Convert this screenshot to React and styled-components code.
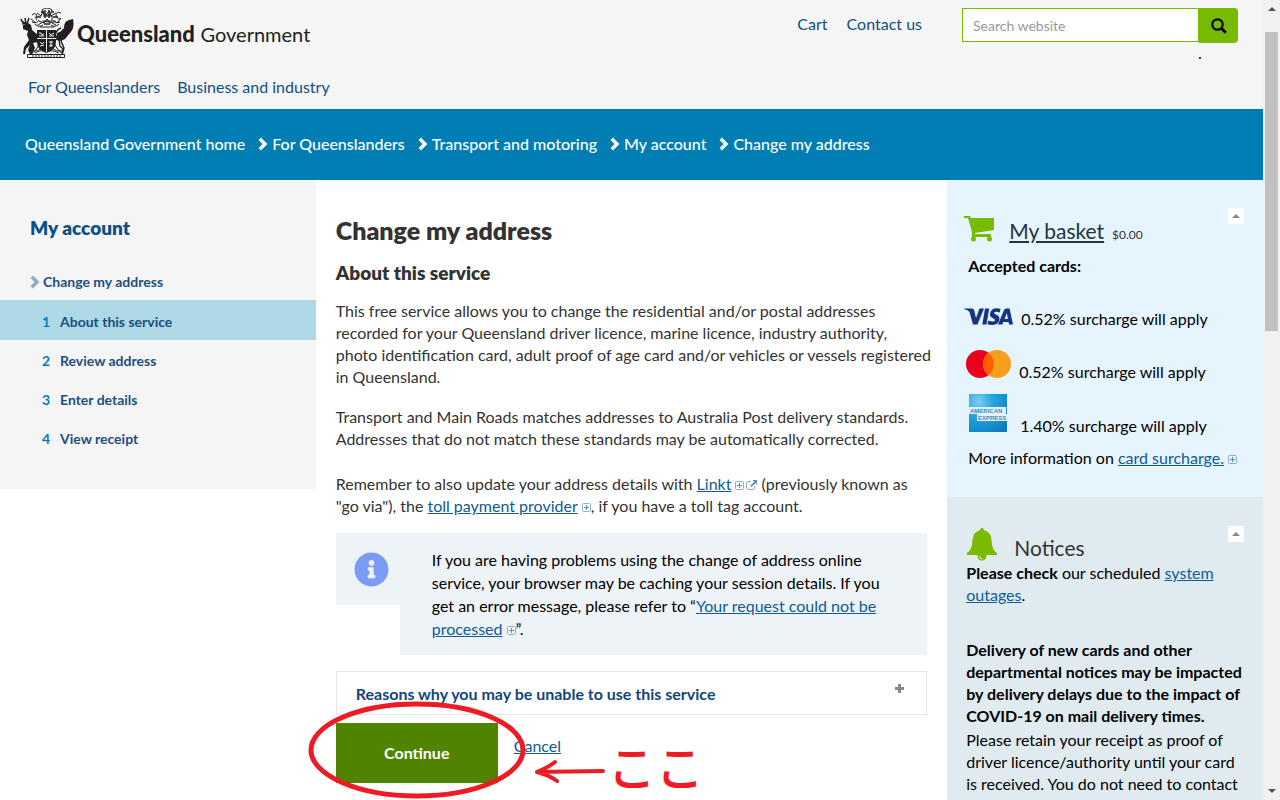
import React from 'react'
import styled, { createGlobalStyle } from 'styled-components'
import { FaInfoCircle } from 'react-icons/fa'

const GlobalStyle = createGlobalStyle`
    *{
        box-sizing: border-box;
    }
    body{
        margin: 0;
        font-family: Lato, "Liberation Sans", sans-serif;
        font-size: 16px;
        line-height: 22px;
        color: #333;
        background: #fff;
        overflow: hidden;
    }
    h1, h2, h3, p, ol, ul{
        margin: 0;
        padding: 0;
        font-weight: 400;
    }
    ol, ul{
        list-style: none;
    }
    button, input{
        font-family: inherit;
        border-radius: 0;
    }
`

const Window = styled.div`
    display: grid;
    grid-template-columns: minmax(0, 1fr) 17px;
    height: 100vh;
    overflow: hidden;
`

const Page = styled.div`
    height: 100vh;
    overflow: hidden;
`

const ScrollTrack = styled.div`
    display: flex;
    flex-direction: column;
    align-items: center;
    justify-content: space-between;
    background: #f1f1f1;
    padding: 7px 2px;
`

const ScrollThumb = styled.div`
    width: 13px;
    height: 299px;
    background: #c1c1c1;
`

const ScrollTop = styled.div`
    display: flex;
    flex-direction: column;
    align-items: center;
    gap: 21px;
`

const Header = styled.header`
    background: #f5f5f5;
    height: 109px;
    padding: 8px 25px 0 20px;
    display: flex;
    flex-direction: column;
    justify-content: space-between;
`

const HeaderTop = styled.div`
    display: flex;
    justify-content: space-between;
    align-items: flex-start;
`

const Brand = styled.a`
    display: flex;
    align-items: center;
    gap: 3px;
    color: #231f20;
    text-decoration: none;
    font-size: 22px;
    line-height: 52px;
    white-space: nowrap;
`

const BrandStrong = styled.strong`
    font-weight: 900;
`

const BrandLight = styled.span`
    font-size: 20px;
    font-weight: 400;
`

const HeaderTools = styled.div`
    display: flex;
    align-items: flex-start;
    gap: 40px;
`

const TopLinks = styled.nav`
    display: flex;
    gap: ${({ $gap }) => $gap};
    padding: ${({ $padding }) => $padding};
`

const PlainLink = styled.a`
    color: #0e4f85;
    text-decoration: none;
    white-space: nowrap;
    &:hover{
        text-decoration: underline;
    }
`

const SearchForm = styled.form`
    display: flex;
    align-items: flex-start;
    width: 276px;
`

const SearchInput = styled.input`
    flex: 1;
    min-width: 0;
    height: 34px;
    padding: 0 10px;
    border: 1px solid #78ba00;
    background: #fff;
    font-size: 14px;
    &::placeholder{
        color: #999;
        opacity: 1;
    }
`

const SearchButton = styled.button`
    width: 39px;
    height: 35px;
    padding: 0;
    display: flex;
    align-items: center;
    justify-content: center;
    border: 0;
    border-radius: 0 4px 4px 0;
    background: #78ba00;
    cursor: pointer;
`

const SearchNote = styled.p`
    padding-left: 236px;
    line-height: 20px;
    color: #000;
`

const Breadcrumb = styled.nav`
    background: #007eb3;
    height: 71px;
    padding: 0 25px 2px;
    display: flex;
    align-items: center;
`

const Crumbs = styled.ol`
    display: flex;
    gap: 13px;
`

const Crumb = styled.li`
    display: flex;
    align-items: center;
    gap: 4px;
`

const CrumbLink = styled.a`
    color: #fff;
    text-decoration: none;
    white-space: nowrap;
    font-weight: 500;
`

const Columns = styled.div`
    display: grid;
    grid-template-columns: 1fr 2fr 1fr;
    align-items: start;
`

const SideNav = styled.nav`
    background: #f5f5f5;
    height: 309px;
    padding-top: 36px;
    font-size: 14px;
`

const SideTitle = styled.h2`
    padding: 0 30px;
    font-size: 19px;
    line-height: 24px;
    font-weight: 800;
    color: #0e4f85;
`

const SideParent = styled.a`
    display: flex;
    align-items: center;
    gap: 3px;
    padding: 31px 30px 7px;
    font-weight: 700;
    color: #1b4f80;
    text-decoration: none;
`

const Step = styled.a`
    display: flex;
    gap: 10px;
    height: ${({ $active }) => ($active ? '40px' : '39px')};
    align-items: center;
    padding: 3px 30px 0 42px;
    background: ${({ $active }) => ($active ? '#add8e6' : 'transparent')};
    font-weight: 700;
    color: #1b4f80;
    text-decoration: none;
`

const StepNumber = styled.span`
    width: 8px;
    color: #007eb3;
`

const Main = styled.main`
    padding: 36px 20px 0;
`

const Title = styled.h1`
    font-size: 25px;
    line-height: 28px;
    font-weight: 800;
`

const Subtitle = styled.h2`
    font-size: 19px;
    line-height: 24px;
    font-weight: 800;
    padding-top: 17px;
`

const Text = styled.p`
    margin-right: -6px;
    padding-top: ${({ $gap }) => $gap};
`

const TextLink = styled.a`
    color: #0e5b96;
    text-decoration: underline;
`

const InlineIcon = styled.svg`
    margin-left: ${({ $gap = '4px' }) => $gap};
`

const Callout = styled.section`
    display: flex;
    align-items: flex-start;
    margin-top: 16px;
    color: #000;
    line-height: 23px;
`

const CalloutIcon = styled.div`
    width: 64px;
    height: 72px;
    display: flex;
    align-items: center;
    justify-content: center;
    padding-left: 8px;
    background: #edf3f6;
    color: #7a9cf5;
`

const CalloutText = styled.p`
    flex: 1;
    padding: 15px 32px;
    background: #edf3f6;
`

const Accordion = styled.button`
    display: flex;
    align-items: center;
    justify-content: space-between;
    width: 100%;
    height: 44px;
    margin-top: 16px;
    padding: 0 22px 0 19px;
    border: 1px solid #e5e5e5;
    background: #fff;
    font-size: 16px;
    font-weight: 700;
    color: #12457c;
    text-align: left;
`

const PlusIcon = styled.svg`
    margin-bottom: 10px;
`

const Actions = styled.div`
    position: relative;
    display: flex;
    align-items: flex-start;
    gap: 16px;
    margin-top: 8px;
`

const ContinueButton = styled.button`
    width: 162px;
    height: 60px;
    padding: 0 0 2px;
    border: 0;
    background: #4f8300;
    color: #fff;
    font-size: 16px;
    font-weight: 700;
    cursor: pointer;
`

const CancelLink = styled(TextLink)`
    padding-top: 12px;
`

const Marker = styled.svg`
    position: absolute;
    left: -28px;
    top: -22px;
    pointer-events: none;
`

const MarkerText = styled.span`
    position: absolute;
    left: 272px;
    top: 18px;
    font-family: "Noto Sans CJK JP", sans-serif;
    font-size: 48px;
    line-height: 48px;
    font-weight: 500;
    color: #ed1c24;
    white-space: nowrap;
`

const Panel = styled.section`
    min-height: 317px;
    padding: ${({ $padding }) => $padding};
    background: ${({ $tone }) => ($tone === 'basket' ? '#e6f4fe' : '#e0ebef')};
    color: #000;
`

const PanelHead = styled.div`
    display: flex;
    align-items: flex-start;
`

const PanelTitle = styled.h2`
    flex: 1;
    display: flex;
    align-items: baseline;
    gap: 8px;
    padding: ${({ $padding }) => $padding};
    font-size: 21px;
    line-height: 26px;
    color: #333;
`

const PanelTitleLink = styled.a`
    color: #22343c;
`

const Amount = styled.span`
    font-size: 12px;
`

const IconSlot = styled.div`
    padding: ${({ $padding }) => $padding};
    line-height: 0;
`

const Toggle = styled.button`
    width: 16px;
    height: 16px;
    padding: 0;
    border: 0;
    display: flex;
    align-items: center;
    justify-content: center;
    background: #fff;
`

const PanelText = styled.p`
    padding: ${({ $padding = '0' }) => $padding};
`

const CardList = styled.ul`
    padding-top: 27px;
`

const CardRow = styled.li`
    display: flex;
    align-items: flex-end;
    height: ${({ $height }) => $height};
    padding-left: ${({ $indent = '0' }) => $indent};
    gap: ${({ $gap = '8px' }) => $gap};
`

const crumbs = [
    'Queensland Government home',
    'For Queenslanders',
    'Transport and motoring',
    'My account',
    'Change my address',
]

const steps = ['About this service', 'Review address', 'Enter details', 'View receipt']

const Chevron = ({ color = '#fff' }) => (
    <svg width="10" height="14" viewBox="0 0 10 14" aria-hidden="true">
        <path d="M1.8 1.8 7 7l-5.2 5.2" fill="none" stroke={color} strokeWidth="3.4" />
    </svg>
)

const Triangle = ({ down, color = '#505050' }) => (
    <svg width="8" height="4" viewBox="0 0 8 4" aria-hidden="true">
        <path d={down ? 'M0 0h8L4 4z' : 'M0 4h8L4 0z'} fill={color} />
    </svg>
)

const ExpandMark = () => (
    <InlineIcon width="9" height="9" viewBox="0 0 9 9" aria-hidden="true">
        <rect x=".5" y=".5" width="8" height="8" rx="1" fill="none" stroke="#8fb0c8" />
        <path d="M2 4.5h5M4.5 2v5" stroke="#5f8fb3" />
    </InlineIcon>
)

const ExternalMark = () => (
    <InlineIcon $gap="2px" width="11" height="10" viewBox="0 0 11 10" aria-hidden="true">
        <path d="M5 1.5H2Q.5 1.500.5 3V8Q.5 9.500 2 9.500h5q1.500 0 1.500-1.500V6" fill="none" stroke="#8fb0c8" />
        <path d="M6.500 0H11v4.500L9.500 3 5.500 7 4.200 5.700l4-4z" fill="#5f8fb3" />
    </InlineIcon>
)

const Crest = () => (
    <svg width="54" height="52" viewBox="0 0 54 52" aria-hidden="true">
        <g fill="none" stroke="#231f20" strokeWidth="1">
            <path d="M12 7q2-3 5 0-3 3 0 5M12 14q5 2 7-2M41 5q-5-2-5 2t5 4M40 14q-5 2-7-2M17 5l4 3 2-5 3 4 3-4 2 5 5-3M18 17q8-7 18 0M19 13l5 2 3-4 3 4 6-2" />
            <path d="M22 2q5-4 10 0l-2 5h-6zM23 8h9v5h-9M20 19h14M15 16q4 4 8 1M39 16q-4 4-8 1M11 11l5 4M41 10l-4 5" />
            <path d="M21 4h3M31 4h3M25 2v8M29 2v8M16 9h5M33 9h5M24 16h6" strokeWidth="1.4" />
            <path d="M15 45q7-4 11-1 5-3 13 1M12 43q6 1 10-3M42 43q-6 1-10-3M19 37q-3 6-7 8M35 37q3 6 7 8" />
            <path d="M7.500 46.500h37v3h-37z" fill="#f5f5f5" />
            <path d="M12 48h29" strokeDasharray="2 1" strokeWidth=".8" />
            <path d="M1 11q1 4 5 4M2 16l4-1M5 10l1 6M9 10l-2 6" strokeWidth="1.5" />
        </g>
        {/* red deer */}
        <path d="M3 17l5-2 3 2 1 5 6 5v7l-5 1 2 5-3 5 1 1h-3l-2-4 2-5-4 4-1 5H3l1-7 5-7-2-5 1-4-5-2z" fill="#231f20" />
        {/* brolga */}
        <path d="M53 11q2 9-3 14l-5 6-4 2-5-1 1-7 3-1 4-4q0-7 5-8z" fill="#231f20" />
        <path d="M42 32q-5-1-7-5 2-6 6-7" fill="none" stroke="#231f20" strokeWidth="1.6" />
        <path d="M39 32l1 6 3 3-1 6M41 33l3 7-2 7" fill="none" stroke="#231f20" strokeWidth="1.4" />
        <path d="M17 22h19v12q0 8-9.500 11Q17 42 17 34z" fill="#231f20" />
        <g fill="none" stroke="#f5f5f5" strokeWidth="1">
            <path d="M26.500 22v22M17 30.500h19" />
            <path d="M19 25h2l1 2 2-1M19 28h5M29 25l2 2 3-2M29 28h5M20 34l2 2 2-2M20 38l4-1M29 34h4M31 33v6M29 38l4-1" />
        </g>
    </svg>
)

const CartIcon = () => (
    <svg width="30" height="26" viewBox="0 0 30 26" aria-hidden="true">
        <path d="M0 0h6l1 2h23v12L11 17v1h16v3H8V16L4 2H0z" fill="#78ba00" />
        <circle cx="9.500" cy="23" r="2.500" fill="#78ba00" />
        <circle cx="25.500" cy="23" r="2.500" fill="#78ba00" />
    </svg>
)

const BellIcon = () => (
    <svg width="30" height="33" viewBox="0 0 30 33" aria-hidden="true">
        <path d="M15 0q1.800 0 2 2.200Q24 4 24.500 12q.3 10 5.500 13v2H0v-2q5.200-3 5.500-13Q6 4 13 2.200 13.200 0 15 0z" fill="#78ba00" />
        <path d="M10.500 27h9q0 5.500-4.500 5.500T10.500 27z" fill="#78ba00" />
        <path d="M12.500 28q0 3 3 3" fill="none" stroke="#e0ebef" />
    </svg>
)

const VisaLogo = () => (
    <svg width="49" height="17" viewBox="0 0 49 17" role="img" aria-label="Visa">
        <g fill="#15357f">
            <path d="M0 .5h8q1.700 0 2.100 1.600L12 10 15.500.5H20L13.500 16.500H9L5.500 4Q4 2 0 1z" />
            <path d="M21 .5h4.200l-2.700 16h-4.200z" />
            <path d="M36.500 1 35.800 4.500q-5.300-1.800-5.600.4 0 .8 2.400 1.900 3.200 1.500 2.900 4.500-.7 5.700-7.300 5.700-3 0-4.700-.8l.8-3.700q6.200 2.200 6.700-.3.1-1-2.400-2.200Q25.500 8.500 26 5.500 27 .2 33 .2q2 0 3.500.8z" />
            <path d="M42 .5h3.600l3.400 16h-3.900l-.6-2.500h-5.200l-.9 2.500H34l6.100-14.500Q40.700.5 42 .5zm.8 4.500-2.200 6h3.300z" />
        </g>
    </svg>
)

const MastercardLogo = () => (
    <svg width="46" height="28" viewBox="0 0 46 28" role="img" aria-label="Mastercard">
        <circle cx="14" cy="14" r="14" fill="#eb001b" />
        <circle cx="31" cy="14" r="14" fill="#f79e1b" />
        <path d="M22.500 2.900a14 14 0 0 1 0 22.200 14 14 0 0 1 0-22.200z" fill="#ff5f00" />
    </svg>
)

const AmexLogo = () => (
    <svg width="38" height="38" viewBox="0 0 38 38" role="img" aria-label="American Express">
        <defs>
            <radialGradient id="amex" cx=".25" cy=".2" r="1">
                <stop offset="0" stopColor="#7ccdf2" />
                <stop offset=".4" stopColor="#22a4dd" />
                <stop offset="1" stopColor="#1079bd" />
            </radialGradient>
        </defs>
        <rect width="38" height="38" fill="url(#amex)" />
        <path d="M0 13h37v7h1v7H8v-7H0z" fill="#e3f2fb" />
        <g fontFamily="Liberation Sans, sans-serif" fontWeight="700" fontSize="6" fill="#2f8fcb">
            <text x="1" y="19">AMERICAN</text>
            <text x="9" y="26">EXPRESS</text>
        </g>
    </svg>
)

const App = () => {
    return (
        <>
            <GlobalStyle />
            <Window>
                <Page>
                    <Header>
                        <HeaderTop>
                            <Brand href="#">
                                <Crest />
                                <span>
                                    <BrandStrong>Queensland</BrandStrong> <BrandLight>Government</BrandLight>
                                </span>
                            </Brand>
                            <HeaderTools>
                                <TopLinks $gap="19px" $padding="5px 0 0">
                                    <PlainLink href="#">Cart</PlainLink>
                                    <PlainLink href="#">Contact us</PlainLink>
                                </TopLinks>
                                <div>
                                    <SearchForm role="search">
                                        <SearchInput type="text" aria-label="Search website" placeholder="Search website" />
                                        <SearchButton type="button" aria-label="Search">
                                            <svg width="16" height="16" viewBox="0 0 16 16" aria-hidden="true">
                                                <circle cx="6.500" cy="6.500" r="5.200" fill="none" stroke="#000" strokeWidth="2.2" />
                                                <path d="m10.300 10.300 4.500 4.500" stroke="#000" strokeWidth="2.8" />
                                            </svg>
                                        </SearchButton>
                                    </SearchForm>
                                    <SearchNote>.</SearchNote>
                                </div>
                            </HeaderTools>
                        </HeaderTop>
                        <TopLinks $gap="17px" $padding="0 8px 11px">
                            <PlainLink href="#">For Queenslanders</PlainLink>
                            <PlainLink href="#">Business and industry</PlainLink>
                        </TopLinks>
                    </Header>

                    <Breadcrumb aria-label="Breadcrumb">
                        <Crumbs>
                            {crumbs.map((crumb, index) => (
                                <Crumb key={crumb}>
                                    {index > 0 && <Chevron />}
                                    <CrumbLink href="#">{crumb}</CrumbLink>
                                </Crumb>
                            ))}
                        </Crumbs>
                    </Breadcrumb>

                    <Columns>
                        <SideNav>
                            <SideTitle>My account</SideTitle>
                            <SideParent href="#">
                                <Chevron color="#8fabc4" />
                                Change my address
                            </SideParent>
                            <ol>
                                {steps.map((step, index) => (
                                    <li key={step}>
                                        <Step href="#" $active={index === 0}>
                                            <StepNumber>{index + 1}</StepNumber>
                                            {step}
                                        </Step>
                                    </li>
                                ))}
                            </ol>
                        </SideNav>

                        <Main>
                            <Title>Change my address</Title>
                            <Subtitle>About this service</Subtitle>
                            <Text $gap="15px">
                                This free service allows you to change the residential and/or postal addresses
                                recorded for your Queensland driver licence, marine licence, industry authority,
                                <br />
                                photo identification card, adult proof of age card and/or vehicles or vessels registered
                                <br />
                                in Queensland.
                            </Text>
                            <Text $gap="18px">
                                Transport and Main Roads matches addresses to Australia Post delivery standards.
                                Addresses that do not match these standards may be automatically corrected.
                            </Text>
                            <Text $gap="23px">
                                Remember to also update your address details with <TextLink href="#">Linkt</TextLink>
                                <ExpandMark />
                                <ExternalMark /> (previously known as "go via"), the{' '}
                                <TextLink href="#">toll payment provider</TextLink>
                                <ExpandMark />, if you have a toll tag account.
                            </Text>
                            <Callout>
                                <CalloutIcon>
                                    <FaInfoCircle size={35} />
                                </CalloutIcon>
                                <CalloutText>
                                    If you are having problems using the change of address online service, your
                                    browser may be caching your session details. If you get an error message, please
                                    refer to “<TextLink href="#">Your request could not be processed</TextLink>
                                    <ExpandMark />
                                    ”.
                                </CalloutText>
                            </Callout>
                            <Accordion type="button" aria-expanded="false">
                                Reasons why you may be unable to use this service
                                <PlusIcon width="9" height="9" viewBox="0 0 9 9" aria-hidden="true">
                                    <path d="M0 4.500h9M4.500 0v9" stroke="#888" strokeWidth="3" />
                                </PlusIcon>
                            </Accordion>
                            <Actions>
                                <ContinueButton type="button">Continue</ContinueButton>
                                <CancelLink href="#">Cancel</CancelLink>
                                <Marker width="300" height="99" viewBox="0 0 300 99" aria-hidden="true">
                                    <g fill="none" stroke="#ed1c24" strokeWidth="5" strokeLinecap="round" strokeLinejoin="round">
                                        <ellipse cx="109" cy="49" rx="106" ry="46" />
                                        <path d="M295 70l-66 1M247 61q-6 5-18 10 12 3 20 9" strokeWidth="4" />
                                    </g>
                                </Marker>
                                <MarkerText lang="ja">ここ</MarkerText>
                            </Actions>
                        </Main>

                        <aside>
                            <Panel $tone="basket" $padding="28px 19px 0 17px">
                                <PanelHead>
                                    <IconSlot $padding="8px 0 0">
                                        <CartIcon />
                                    </IconSlot>
                                    <PanelTitle $padding="10px 0 0 15px">
                                        <PanelTitleLink href="#">My basket</PanelTitleLink>
                                        <Amount>$0.00</Amount>
                                    </PanelTitle>
                                    <Toggle type="button" aria-label="Collapse my basket">
                                        <Triangle color="#888" />
                                    </Toggle>
                                </PanelHead>
                                <PanelText $padding="7px 0 0 4px">
                                    <strong>Accepted cards:</strong>
                                </PanelText>
                                <CardList>
                                    <CardRow $height="26px">
                                        <IconSlot $padding="0 0 5px">
                                            <VisaLogo />
                                        </IconSlot>
                                        0.52% surcharge will apply
                                    </CardRow>
                                    <CardRow $height="53px" $indent="2px" $gap="7px">
                                        <IconSlot $padding="0 0 5px">
                                            <MastercardLogo />
                                        </IconSlot>
                                        0.52% surcharge will apply
                                    </CardRow>
                                    <CardRow $height="54px" $indent="5px" $gap="13px">
                                        <IconSlot $padding="0 0 5px">
                                            <AmexLogo />
                                        </IconSlot>
                                        1.40% surcharge will apply
                                    </CardRow>
                                </CardList>
                                <PanelText $padding="10px 0 0 4px">
                                    More information on <TextLink href="#">card surcharge.</TextLink>
                                    <ExpandMark />
                                </PanelText>
                            </Panel>
                            <Panel $tone="notices" $padding="29px 19px 0">
                                <PanelHead>
                                    <IconSlot $padding="2px 0 0 1px">
                                        <BellIcon />
                                    </IconSlot>
                                    <PanelTitle $padding="9px 0 0 17px">Notices</PanelTitle>
                                    <Toggle type="button" aria-label="Collapse notices">
                                        <Triangle color="#888" />
                                    </Toggle>
                                </PanelHead>
                                <PanelText $padding="1px 0 0">
                                    <strong>Please check</strong> our scheduled <TextLink href="#">system outages</TextLink>.
                                </PanelText>
                                <PanelText $padding="33px 0 0">
                                    <strong>
                                        Delivery of new cards and other departmental notices may be impacted by
                                        delivery delays due to the impact of COVID-19 on mail delivery times.
                                    </strong>
                                </PanelText>
                                <PanelText $padding="2px 0 0">
                                    Please retain your receipt as proof of driver licence/authority until your card
                                    is received. You do not need to contact
                                </PanelText>
                            </Panel>
                        </aside>
                    </Columns>
                </Page>
                <ScrollTrack aria-hidden="true">
                    <ScrollTop>
                        <Triangle />
                        <ScrollThumb />
                    </ScrollTop>
                    <Triangle down />
                </ScrollTrack>
            </Window>
        </>
    )
}

export default App
